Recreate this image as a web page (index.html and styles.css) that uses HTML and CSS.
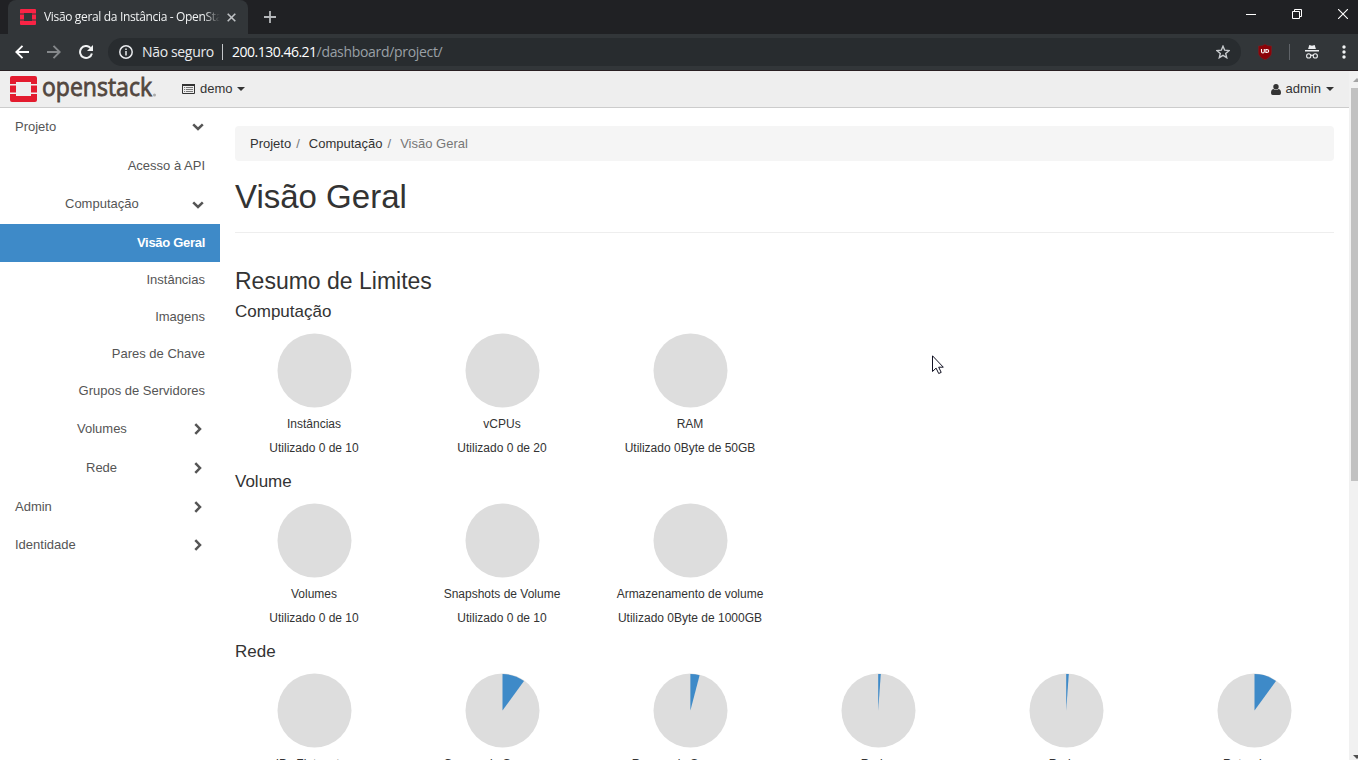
FILE: index.html
```html
<!DOCTYPE html>
<html lang="pt-BR">
<head>
<meta charset="utf-8">
<title>Visão geral da Instância - OpenStack Dashboard</title>
<link rel="stylesheet" href="styles.css">
</head>
<body>
<div class="window">
  <div class="tabs">
    <div class="tab">
      <svg class="favicon" width="16" height="16" viewBox="0 0 16 16" fill="#fa2345"><path d="M1 0h14q1 0 1 1v3.500h-4V4H4v.5H0V1q0-1 1-1zM0 5.500h4v5H0zM12 5.500h4v5h-4zM0 11.500h4v.5h8v-.5h4V15q0 1-1 1H1q-1 0-1-1z"/></svg>
      <span class="tab-title">Visão geral da Instância - OpenStack</span>
      <svg class="tab-close" width="9" height="9" viewBox="0 0 9 9" stroke="#bfc2c5" stroke-width="1.600"><path d="M.7.7l7.600 7.600M8.300.7L.7 8.300"/></svg>
    </div>
    <svg class="new-tab" width="12" height="12" viewBox="0 0 12 12" stroke="#b5b8bb" stroke-width="1.800"><path d="M6 0v12M0 6h12"/></svg>
    <div class="controls">
      <svg width="10" height="10" viewBox="0 0 10 10" stroke="#fff"><path d="M0 5.500h10"/></svg>
      <svg width="10" height="10" viewBox="0 0 10 10" fill="none" stroke="#fff"><path d="M.5 2.500h7v7h-7zM2.500 2.500v-2h7v7h-2"/></svg>
      <svg width="10" height="10" viewBox="0 0 10 10" stroke="#fff" stroke-width="1.100"><path d="M0 0l10 10M10 0L0 10"/></svg>
    </div>
  </div>
  <div class="toolbar">
    <svg width="14" height="14" viewBox="0 0 14 14" fill="none" stroke="#fff" stroke-width="1.900"><path d="M14 7H1.500M7.500.8L1.300 7l6.200 6.200"/></svg>
    <svg width="14" height="14" viewBox="0 0 14 14" fill="none" stroke="#85888b" stroke-width="1.900"><path d="M0 7h12.500M6.500.8L12.700 7l-6.200 6.200"/></svg>
    <svg width="14" height="14" viewBox="0 0 14 14" fill="none" stroke="#f1f3f4" stroke-width="2"><path d="M12.900 8.400A6 6 0 1 1 11.500 2.900"/><path d="M14 0v6H8z" fill="#f1f3f4" stroke="none"/></svg>
    <div class="address">
      <svg width="14" height="14" viewBox="0 0 14 14" fill="none" stroke="#e8eaed" stroke-width="1.500"><circle cx="7" cy="7" r="6.200"/><path d="M7 6v4.500M7 3.400v1.600"/></svg>
      <span class="insecure">Não seguro</span>
      <span class="divider"></span>
      <span class="url">200.130.46.21<span>/dashboard/project/</span></span>
      <svg class="star" width="14" height="14" viewBox="0 0 14 14" fill="none" stroke="#c7cacd" stroke-width="1.400"><path d="M7 1.200l1.700 4 4.300.4-3.300 2.800 1 4.300L7 10.400l-3.700 2.300 1-4.300L1 5.600l4.300-.4z"/></svg>
    </div>
    <svg class="shield" width="14" height="16" viewBox="0 0 14 16"><path d="M7 0C5 1.500 3 2 .3 1.900V8c0 4 3 6.200 6.700 7.800 3.700-1.600 6.700-3.800 6.700-7.800V1.900C11 2 9 1.500 7 0z" fill="#8b0308" stroke="#6b3035" stroke-width=".5"/><path d="M3.500 5v2.500q0 1.500 1.400 1.500T6.300 7.500V5M7.900 5.500h.8q2 0 2 1.500t-2 1.500h-.8z" fill="none" stroke="#fff" stroke-width="1.100"/></svg>
    <span class="tool-divider"></span>
    <svg class="incognito" width="14" height="14" viewBox="0 0 14 14"><path d="M4.300 0l2.700.7L9.700 0l1.200 4H3.100zM0 5h14v1.400H0z" fill="#eceef0"/><g fill="none" stroke="#eceef0" stroke-width="1.100"><circle cx="3.700" cy="10.900" r="2.100"/><circle cx="10.300" cy="10.900" r="2.100"/><path d="M5.800 10.500q1.200-.7 2.400 0"/></g></svg>
    <svg class="dots" width="4" height="14" viewBox="0 0 4 14" fill="#f1f3f4"><circle cx="2" cy="2" r="1.700"/><circle cx="2" cy="7" r="1.700"/><circle cx="2" cy="12" r="1.700"/></svg>
  </div>
  <div class="viewport">
    <div class="page">
      <header class="navbar">
        <svg class="brand-mark" width="27" height="26" viewBox="0 0 27 26" fill="#e31b2e"><path d="M2 0h23q2 0 2 2v6h-6V6H6v2H0V2q0-2 2-2zM0 9.500h6v7H0zM21 9.500h6v7h-6zM0 18h6v2h15v-2h6v6q0 2-2 2H2q-2 0-2-2z"/></svg>
        <svg class="brand-name" width="118" height="36" viewBox="0 0 118 36"><text x="0" y="25" textLength="110" lengthAdjust="spacingAndGlyphs">openstack</text><circle cx="112.500" cy="24" r="1.500"/></svg>
        <div class="context">
          <svg width="13" height="10" viewBox="0 0 13 10"><path d="M.5 1v8.500h12V1z" fill="none" stroke="#333"/><path d="M0 0h13v2H0z" fill="#333"/><path d="M2 3.500h1.200M4 3.500h7M2 5.500h1.200M4 5.500h7M2 7.500h1.200M4 7.500h7" stroke="#777"/></svg>
          <span>demo</span><i class="caret"></i>
        </div>
        <div class="user">
          <svg width="10" height="11" viewBox="0 0 10 11" fill="#333"><circle cx="5" cy="2.800" r="2.700"/><path d="M2.300 5Q5 7 7.700 5 10 5.500 10 9q0 2-1.700 2H1.700Q0 11 0 9 0 5.500 2.300 5z"/></svg>
          <span>admin</span><i class="caret"></i>
        </div>
      </header>
      <div class="body">
        <nav class="sidebar">
          <a class="item top">Projeto<svg class="down" viewBox="0 0 12 8"><path d="M1.200 1.300L6 6l4.800-4.700"/></svg></a>
          <a class="item link first">Acesso à API</a>
          <a class="item group g-comp">Computação<svg class="down" viewBox="0 0 12 8"><path d="M1.200 1.300L6 6l4.800-4.700"/></svg></a>
          <a class="item link active">Visão Geral</a>
          <a class="item link">Instâncias</a>
          <a class="item link">Imagens</a>
          <a class="item link">Pares de Chave</a>
          <a class="item link">Grupos de Servidores</a>
          <a class="item group g-vol">Volumes<svg class="right" viewBox="0 0 8 12"><path d="M1.300 1.200L6 6l-4.700 4.800"/></svg></a>
          <a class="item group g-rede">Rede<svg class="right" viewBox="0 0 8 12"><path d="M1.300 1.200L6 6l-4.700 4.800"/></svg></a>
          <a class="item root">Admin<svg class="right" viewBox="0 0 8 12"><path d="M1.300 1.200L6 6l-4.700 4.800"/></svg></a>
          <a class="item root last">Identidade<svg class="right" viewBox="0 0 8 12"><path d="M1.300 1.200L6 6l-4.700 4.800"/></svg></a>
        </nav>
        <main class="content">
          <div class="breadcrumb"><span>Projeto</span><span class="sep">/</span><span>Computação</span><span class="sep">/</span><span class="current">Visão Geral</span></div>
          <h1>Visão Geral</h1>
          <h3>Resumo de Limites</h3>
          <h4>Computação</h4>
          <div class="charts">
            <div class="chart"><svg viewBox="0 0 75 75"><circle cx="37.500" cy="37.500" r="37"/></svg><p>Instâncias</p><p>Utilizado 0 de 10</p></div>
            <div class="chart"><svg viewBox="0 0 75 75"><circle cx="37.500" cy="37.500" r="37"/></svg><p>vCPUs</p><p>Utilizado 0 de 20</p></div>
            <div class="chart"><svg viewBox="0 0 75 75"><circle cx="37.500" cy="37.500" r="37"/></svg><p>RAM</p><p>Utilizado 0Byte de 50GB</p></div>
          </div>
          <h4>Volume</h4>
          <div class="charts">
            <div class="chart"><svg viewBox="0 0 75 75"><circle cx="37.500" cy="37.500" r="37"/></svg><p>Volumes</p><p>Utilizado 0 de 10</p></div>
            <div class="chart"><svg viewBox="0 0 75 75"><circle cx="37.500" cy="37.500" r="37"/></svg><p>Snapshots de Volume</p><p>Utilizado 0 de 10</p></div>
            <div class="chart"><svg viewBox="0 0 75 75"><circle cx="37.500" cy="37.500" r="37"/></svg><p>Armazenamento de volume</p><p>Utilizado 0Byte de 1000GB</p></div>
          </div>
          <h4>Rede</h4>
          <div class="charts">
            <div class="chart"><svg viewBox="0 0 75 75"><circle cx="37.500" cy="37.500" r="37"/></svg><p>IPs Flutuantes</p></div>
            <div class="chart"><svg viewBox="0 0 75 75"><circle cx="37.500" cy="37.500" r="37"/><path d="M37.500 37.500V1A36.500 36.500 0 0 1 59 8z"/></svg><p>Grupos de Segurança</p></div>
            <div class="chart"><svg viewBox="0 0 75 75"><circle cx="37.500" cy="37.500" r="37"/><path d="M37.400 37.500V1A36.500 36.500 0 0 1 46.600 2.200z"/></svg><p>Regras de Segurança</p></div>
            <div class="chart"><svg viewBox="0 0 75 75"><circle cx="37.500" cy="37.500" r="37"/><path d="M37.200 37.500V1A36.500 36.500 0 0 1 39.800 1.100z"/></svg><p>Redes</p></div>
            <div class="chart"><svg viewBox="0 0 75 75"><circle cx="37.500" cy="37.500" r="37"/><path d="M37.200 37.500V1A36.500 36.500 0 0 1 39.800 1.100z"/></svg><p>Redes</p></div>
            <div class="chart"><svg viewBox="0 0 75 75"><circle cx="37.500" cy="37.500" r="37"/><path d="M37.500 37.500V1A36.500 36.500 0 0 1 59 8z"/></svg><p>Roteadores</p></div>
          </div>
        </main>
      </div>
    </div>
    <div class="scrollbar"><i class="arrow-up"></i><span class="thumb"></span><i class="arrow-down"></i></div>
  </div>
  <svg class="cursor" width="13" height="20" viewBox="0 0 13 20"><path d="M.5.8v15.700l3.600-3.400 2.600 5.400 2.500-1.100-2.500-5.200h4.600z" fill="#fff" stroke="#111122"/></svg>
</div>
</body>
</html>
```
FILE: styles.css
```css
* { box-sizing: border-box; }
body { margin: 0; background: #fff; color: #333; font: 13px/18px "Liberation Sans", Arial, sans-serif; }
h1, h3, h4, p { margin: 0; font-weight: 400; }
svg { display: block; flex: none; }
.window { width: 1358px; height: 760px; overflow: hidden; display: flex; flex-direction: column; position: relative; }

.tabs { height: 34px; flex: none; background: #202124; display: flex; align-items: flex-start; padding-left: 8px; }
.tab { width: 240px; height: 34px; background: #323639; border-radius: 8px 8px 0 0; display: flex; align-items: center; padding-left: 12px; }
.tab-title { width: 178px; margin-left: 8px; overflow: hidden; white-space: nowrap; font: 12px/18px "Open Sans", "Noto Sans", sans-serif; letter-spacing: -.34px; color: #f1f3f4; -webkit-mask-image: linear-gradient(90deg, #000 160px, transparent 176px); mask-image: linear-gradient(90deg, #000 160px, transparent 176px); }
.tab-close { margin-left: 5px; }
.new-tab { margin: 11px 0 0 16px; }
.controls { margin: 9px 10px 0 auto; display: flex; gap: 36px; }

.toolbar { height: 37px; flex: none; background: #323639; border-bottom: 1px solid #281f22; display: flex; align-items: center; padding-left: 15px; gap: 18px; }
.address { width: 1133px; height: 28px; margin-left: -3px; border-radius: 14px; background: #282c2f; display: flex; align-items: center; padding: 0 11px; font: 14px/20px "Open Sans", "Noto Sans", sans-serif; color: #e8eaed; }
.insecure { margin-left: 9px; width: 73px; letter-spacing: -.34px; white-space: nowrap; }
.divider { width: 1px; height: 16px; background: #c4c7ca; margin: 0 9px 0 7px; }
.url { color: #fff; letter-spacing: -.5px; white-space: nowrap; }
.url span { color: #9aa0a6; letter-spacing: -.32px; }
.star { margin-left: auto; }
.shield { margin-left: -1px; }
.tool-divider { width: 1px; height: 16px; background: #5f6368; margin-left: -1px; }
.incognito { margin-left: -3px; }
.dots { margin-left: 5px; }

.viewport { flex: 1; min-height: 0; display: flex; }
.page { width: 1349px; overflow: hidden; }
.navbar { height: 37px; background: #eee; border-bottom: 1px solid #ccc; display: flex; align-items: center; padding-left: 10px; }
.brand-name { margin-left: 5px; overflow: visible; }
.brand-name text { font: 25px "Open Sans", "Noto Sans", sans-serif; fill: #53473f; stroke: #53473f; stroke-width: .8px; }
.brand-name circle { fill: #aaa; }
.context { display: flex; align-items: center; margin-left: 22px; }
.context span { margin-left: 5px; }
.user { display: flex; align-items: center; margin-left: auto; margin-right: 15px; }
.user span { margin-left: 5px; }
.caret { border: 4px solid transparent; border-top-color: #333; border-bottom: 0; margin-left: 5px; }
.context .caret { margin-left: 4px; }

.body { display: flex; }
.sidebar { width: 220px; flex: none; display: flex; flex-direction: column; color: #555; line-height: 18.500px; }
.item { display: flex; align-items: center; height: 37px; padding: 0 15px; }
.item svg { margin-left: auto; fill: none; stroke: #555; stroke-width: 2.500; }
.down { width: 12px; height: 8px; margin-right: 1px; }
.right { width: 8px; height: 12px; margin-right: 3px; margin-top: -1px; }
.top { height: 38px; }
.link { justify-content: flex-end; }
.first { height: 39px; padding-top: 2px; }
.group { height: 39px; }
.g-comp { padding-left: 65px; }
.g-vol { padding-left: 77px; }
.g-rede { padding-left: 86px; }
.active { height: 38px; background: #3e8ac8; color: #fff; font-weight: 700; letter-spacing: -.3px; }
.root { height: 39px; }
.last { height: 37px; }

.content { flex: 1; padding: 18px 15px 0; }
.breadcrumb { height: 35px; border-radius: 4px; background: #f5f5f5; display: flex; align-items: center; padding: 1px 0 0 15px; }
.sep { color: #777; margin: 0 9px 0 5px; }
.current { color: #777; }
h1 { font-size: 33px; line-height: 36px; height: 72px; padding-top: 18px; border-bottom: 1px solid #eee; }
h3 { font-size: 23px; line-height: 26px; margin-top: 35px; }
h4 { font-size: 17px; line-height: 20px; padding-top: 8px; height: 27px; }
.charts { display: flex; margin: 0 -15px; height: 143px; padding-top: 12px; }
.chart { width: 188px; display: flex; flex-direction: column; align-items: center; font-size: 12px; line-height: 18px; white-space: nowrap; }
.chart svg { width: 75px; height: 75px; fill: #ddd; margin: 0 0 7px 1px; }
.chart path { fill: #3e8ac8; }
.chart p + p { margin-top: 6px; }

.scrollbar { width: 9px; background: #f1f1f1; display: flex; flex-direction: column; align-items: flex-end; overflow: hidden; }
.arrow-up { border: 4px solid transparent; border-bottom-color: #a3a3a3; border-top: 0; margin: 7px -3px 6px 0; }
.thumb { width: 7px; height: 393px; background: #c1c1c1; }
.arrow-down { border: 4px solid transparent; border-top-color: #505050; border-bottom: 0; margin: auto -3px 1px 0; }
.cursor { position: absolute; left: 932px; top: 355px; }
```
